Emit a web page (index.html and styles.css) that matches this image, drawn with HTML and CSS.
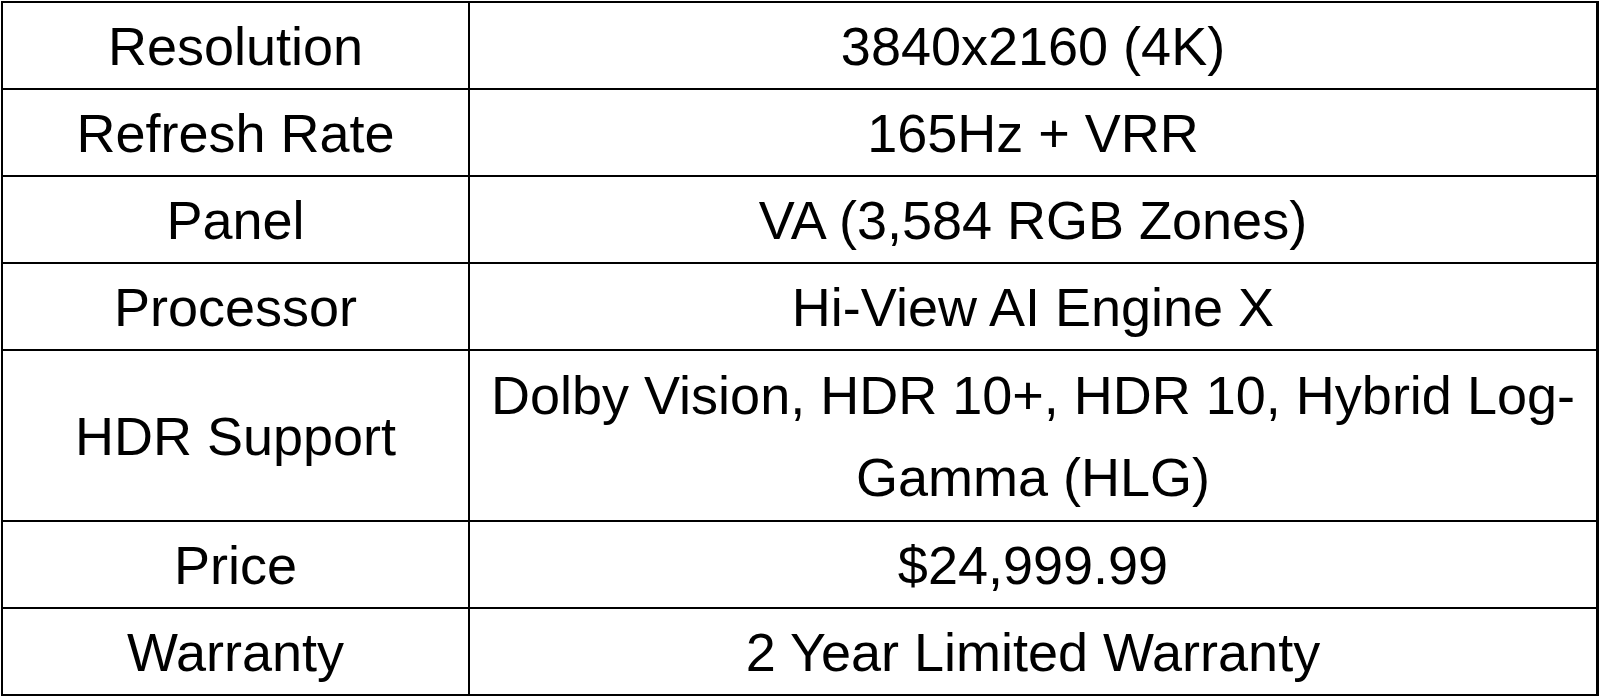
FILE: index.html
```html
<!DOCTYPE html>
<html>
<head>
<meta charset="utf-8">
<link rel="stylesheet" href="styles.css">
</head>
<body>
<table class="spec">
  <tr class="row"><td class="label">Resolution</td><td class="value">3840x2160 (4K)</td></tr>
  <tr class="row"><td class="label">Refresh Rate</td><td class="value">165Hz + VRR</td></tr>
  <tr class="row"><td class="label">Panel</td><td class="value">VA (3,584 RGB Zones)</td></tr>
  <tr class="row"><td class="label">Processor</td><td class="value">Hi-View AI Engine X</td></tr>
  <tr class="row tall"><td class="label">HDR Support</td><td class="value">Dolby Vision, HDR 10+, HDR 10, Hybrid Log-<br>Gamma (HLG)</td></tr>
  <tr class="row"><td class="label">Price</td><td class="value">$24,999.99</td></tr>
  <tr class="row"><td class="label">Warranty</td><td class="value">2 Year Limited Warranty</td></tr>
</table>
</body>
</html>
```
FILE: styles.css
```css
html, body {
  margin: 0;
  padding: 0;
  background: #fff;
}
body {
  padding: 1px 0 0 1px;
}
.spec {
  border-collapse: collapse;
  width: 1598px;
  font-family: "Liberation Sans", Arial, sans-serif;
  font-size: 54px;
  color: #000;
  table-layout: fixed;
}
.spec td {
  border: 2px solid #000;
  text-align: center;
  vertical-align: middle;
  padding: 0;
  line-height: 82px;
}
.spec tr td:last-child {
  border-right-width: 3px;
}
.spec .label {
  width: 465px;
}
.row {
  height: 87px;
}
.row.tall {
  height: 171px;
}
```
